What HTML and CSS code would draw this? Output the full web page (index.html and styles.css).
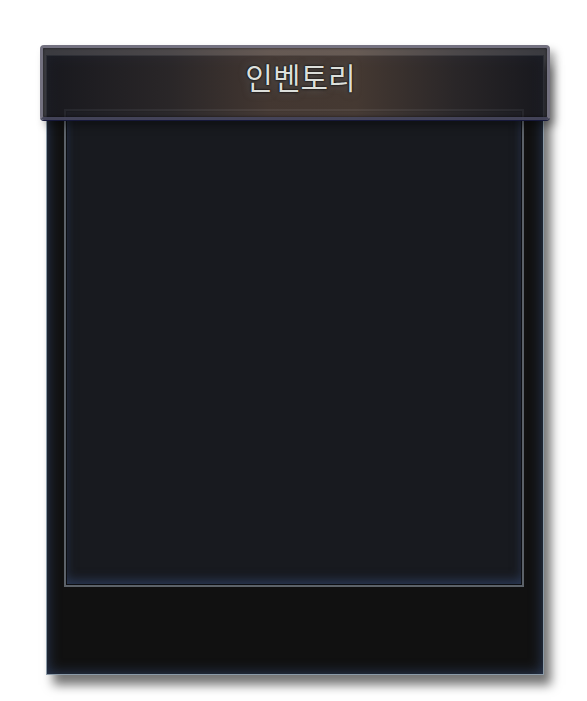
FILE: index.html
```html
<!DOCTYPE html>
<html lang="ko">
<head>
<meta charset="UTF-8">
<title>인벤토리</title>
<link rel="stylesheet" href="styles.css">
</head>
<body>

<div class="window">

<div class="title-bar">
<h1 class="title">인벤토리</h1>
</div>

<div class="panel">
<div class="slots"></div>
</div>

</div>

</body>
</html>
```

FILE: styles.css
```css
body{
margin:0;
background:#ffffff;
font-family:"Noto Sans CJK KR","Noto Sans",sans-serif;
}

.window{
width:510px;
margin:45px 0 0 40px;
padding-bottom:30px;
}

.title-bar{
position:relative;
z-index:1;
box-sizing:border-box;
height:75px;
border:3px solid rgba(118,116,132,0.95);
border-bottom-color:rgba(70,70,92,0.95);
border-radius:4px;
background:linear-gradient(90deg,rgba(27,27,33,0.86) 2%,rgba(46,42,44,0.86) 25%,rgba(76,62,55,0.86) 45%,rgba(78,64,56,0.86) 62%,rgba(46,42,44,0.86) 82%,rgba(27,27,33,0.86) 98%);
box-shadow:inset 0 0 3px rgba(0,0,0,0.6),0 1px 0 #16183a,5px 6px 8px rgba(0,0,0,0.35);
text-align:center;
padding-left:11px;
}

.title{
margin:0;
padding-top:7px;
font-size:30px;
font-weight:normal;
line-height:42px;
color:#dcdfdb;
text-shadow:0 0 1px #000,0 0 3px #000,0 0 8px rgba(120,140,150,0.5);
}

.panel{
box-sizing:border-box;
width:498px;
margin:-65px 0 0 6px;
padding:53px 19px 87px 17px;
border:1px solid #8b9aa7;
background:#111111;
box-shadow:inset 0 0 14px #2d3d5c,7px 10px 10px rgba(0,0,0,0.55);
}

.slots{
box-sizing:border-box;
width:460px;
height:478px;
border:2px solid #5c6269;
background:#181a1f;
box-shadow:inset 0 0 0 1px #0c0e12,inset 0 -8px 12px -4px rgba(48,66,100,0.7),inset 0 0 12px rgba(44,58,88,0.6);
}
```
